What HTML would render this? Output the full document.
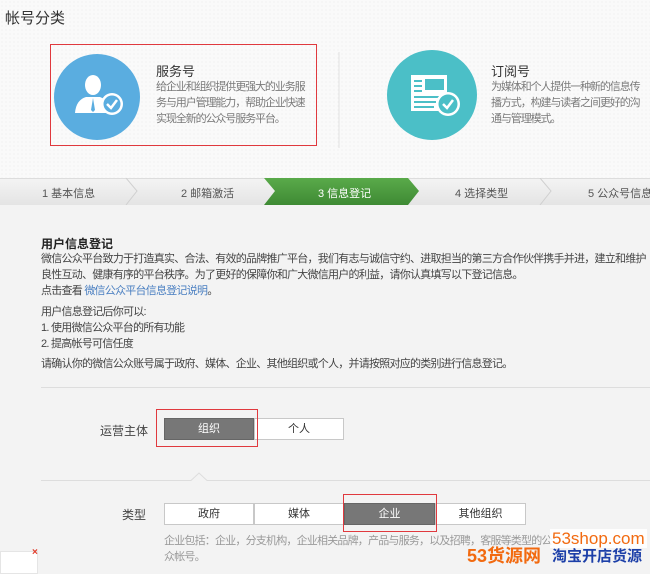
<!DOCTYPE html>
<html><head><meta charset="utf-8"><style>
*{margin:0;padding:0;box-sizing:border-box}
body{width:650px;height:574px;overflow:hidden;position:relative;background:#f3f3f3;font-family:"Liberation Sans","Noto Sans CJK SC",sans-serif;color:#333}
.a{position:absolute;white-space:nowrap}
.top{position:absolute;left:0;top:0;width:650px;height:178px;background-color:#fafafa;background-image:radial-gradient(#ececec 0.6px,transparent 0.7px);background-size:4px 4px}
.desc{font-size:11px;color:#7a7a7a;line-height:16px;letter-spacing:-1.1px}
.txt{font-size:11px;color:#444;line-height:16px;letter-spacing:-0.75px}
.btn{position:absolute;height:22px;border:1px solid #c8c8c8;background:#fff;font-size:11px;text-align:center;line-height:20px;color:#333}
.on{background:#777;color:#fff;border-color:#666}
.red{position:absolute;border:1.5px solid #e0393e}
</style></head><body>
<div class="top"></div>
<div class="a" style="left:5px;top:7px;font-size:15px;color:#333">帐号分类</div>
<svg class="a" style="left:0;top:0" width="650" height="178">
<circle cx="97" cy="97" r="43" fill="#5aade0"/>
<g fill="#fff"><ellipse cx="93" cy="85" rx="8" ry="10"/><path d="M75 113 Q76 100 86 97 L100 97 Q108 100 110 108 L110 113 Z"/></g>
<path d="M93 98 L91 110 L93 112 L95 110 Z" fill="#5aade0"/>
<circle cx="112" cy="104" r="11" fill="#fff"/><circle cx="112" cy="104" r="8.5" fill="#5aade0"/>
<path d="M107 104 L111 108 L117 100" stroke="#fff" stroke-width="2.5" fill="none"/>
<line x1="339" y1="52" x2="339" y2="148" stroke="#e2e2e2"/>
<circle cx="432" cy="95" r="45" fill="#4bbfc7"/>
<rect x="411" y="75" width="36" height="36" fill="#fff"/>
<g stroke="#4bbfc7" stroke-width="2"><line x1="414" y1="81" x2="422" y2="81"/><line x1="414" y1="86" x2="422" y2="86"/><line x1="414" y1="91" x2="422" y2="91"/><line x1="414" y1="97" x2="440" y2="97"/><line x1="414" y1="102" x2="436" y2="102"/><line x1="414" y1="107" x2="434" y2="107"/></g>
<rect x="425" y="79" width="19" height="11" fill="#4bbfc7"/>
<circle cx="448" cy="104" r="12" fill="#fff"/><circle cx="448" cy="104" r="9.5" fill="#4bbfc7"/>
<path d="M443 104 L447 108 L453 100" stroke="#fff" stroke-width="2.5" fill="none"/>
</svg>
<div class="red" style="left:50px;top:44px;width:267px;height:102px"></div>
<div class="a" style="left:156px;top:61px;font-size:13px;color:#333">服务号</div>
<div class="a desc" style="left:156px;top:79px">给企业和组织提供更强大的业务服<br>务与用户管理能力，帮助企业快速<br>实现全新的公众号服务平台。</div>
<div class="a" style="left:491px;top:61px;font-size:13px;color:#333">订阅号</div>
<div class="a desc" style="left:491px;top:79px">为媒体和个人提供一种新的信息传<br>播方式，构建与读者之间更好的沟<br>通与管理模式。</div>
<svg class="a" style="left:0;top:178px" width="650" height="27">
<defs><linearGradient id="g" x1="0" y1="0" x2="0" y2="1"><stop offset="0" stop-color="#f4f4f4"/><stop offset="1" stop-color="#e4e4e4"/></linearGradient>
<linearGradient id="gg" x1="0" y1="0" x2="0" y2="1"><stop offset="0" stop-color="#5aaa4a"/><stop offset="1" stop-color="#3e8a34"/></linearGradient></defs>
<rect width="650" height="27" fill="url(#g)"/>
<line x1="0" y1="0.5" x2="650" y2="0.5" stroke="#ddd"/>
<g stroke="#d0d0d0" fill="none"><path d="M126 0 L137 13 L126 27"/><path d="M540 0 L551 13 L540 27"/></g>
<path d="M264 0 L408 0 L419 13 L408 27 L264 27 L275 13 Z" fill="url(#gg)"/>
</svg>
<div class="a" style="left:42px;top:185px;font-size:11px;color:#555">1 基本信息</div>
<div class="a" style="left:181px;top:185px;font-size:11px;color:#555">2 邮箱激活</div>
<div class="a" style="left:318px;top:185px;font-size:11px;color:#fff">3 信息登记</div>
<div class="a" style="left:455px;top:185px;font-size:11px;color:#555">4 选择类型</div>
<div class="a" style="left:588px;top:185px;font-size:11px;color:#555">5 公众号信息</div>
<div class="a" style="left:41px;top:235px;font-size:12px;font-weight:bold;color:#222">用户信息登记</div>
<div class="a txt" style="left:41px;top:251px">微信公众平台致力于打造真实、合法、有效的品牌推广平台，我们有志与诚信守约、进取担当的第三方合作伙伴携手并进，建立和维护<br>良性互动、健康有序的平台秩序。为了更好的保障你和广大微信用户的利益，请你认真填写以下登记信息。<br>点击查看 <span style="color:#4a7fc1">微信公众平台信息登记说明</span>。</div>
<div class="a txt" style="left:41px;top:304px">用户信息登记后你可以:<br>1. 使用微信公众平台的所有功能<br>2. 提高帐号可信任度</div>
<div class="a txt" style="left:41px;top:356px">请确认你的微信公众账号属于政府、媒体、企业、其他组织或个人，并请按照对应的类别进行信息登记。</div>
<div class="a" style="left:41px;top:387px;width:609px;height:1px;background:#ddd"></div>
<div class="a" style="left:100px;top:422px;font-size:12px;color:#444">运营主体</div>
<div class="btn on" style="left:164px;top:418px;width:90px">组织</div>
<div class="btn" style="left:254px;top:418px;width:90px">个人</div>
<div class="red" style="left:156px;top:409px;width:102px;height:38px"></div>
<svg class="a" style="left:41px;top:472px" width="609" height="10"><path d="M0 8.5 L150 8.5 L158 1 L166 8.5 L609 8.5" stroke="#ddd" fill="none"/></svg>
<div class="a" style="left:122px;top:506px;font-size:12px;color:#444">类型</div>
<div class="btn" style="left:164px;top:503px;width:90px">政府</div>
<div class="btn" style="left:254px;top:503px;width:90px">媒体</div>
<div class="btn on" style="left:344px;top:503px;width:91px">企业</div>
<div class="btn" style="left:435px;top:503px;width:91px">其他组织</div>
<div class="red" style="left:343px;top:494px;width:94px;height:38px"></div>
<div class="a" style="left:164px;top:533px;font-size:11px;color:#999;line-height:16px;letter-spacing:-0.8px">企业包括：企业，分支机构，企业相关品牌，产品与服务，以及招聘，客服等类型的公<br>众帐号。</div>
<div class="a" style="left:550px;top:529px;font-size:17px;color:#f26a10;background:rgba(255,255,255,.85);padding:0 2px;line-height:19px">53shop.com</div>
<div class="a" style="left:467px;top:546px;font-size:18px;font-weight:bold;color:#f26a10;line-height:20px">53货源网</div>
<div class="a" style="left:552px;top:547px;font-size:15px;font-weight:bold;color:#1c3fa8;line-height:19px">淘宝开店货源</div>
<div class="a" style="left:0;top:551px;width:38px;height:23px;background:#fff;border:1px solid #e5e5e5"></div>
<div class="a" style="left:32px;top:547px;font-size:10px;color:#e03a2a;font-weight:bold">×</div>
</body></html>
